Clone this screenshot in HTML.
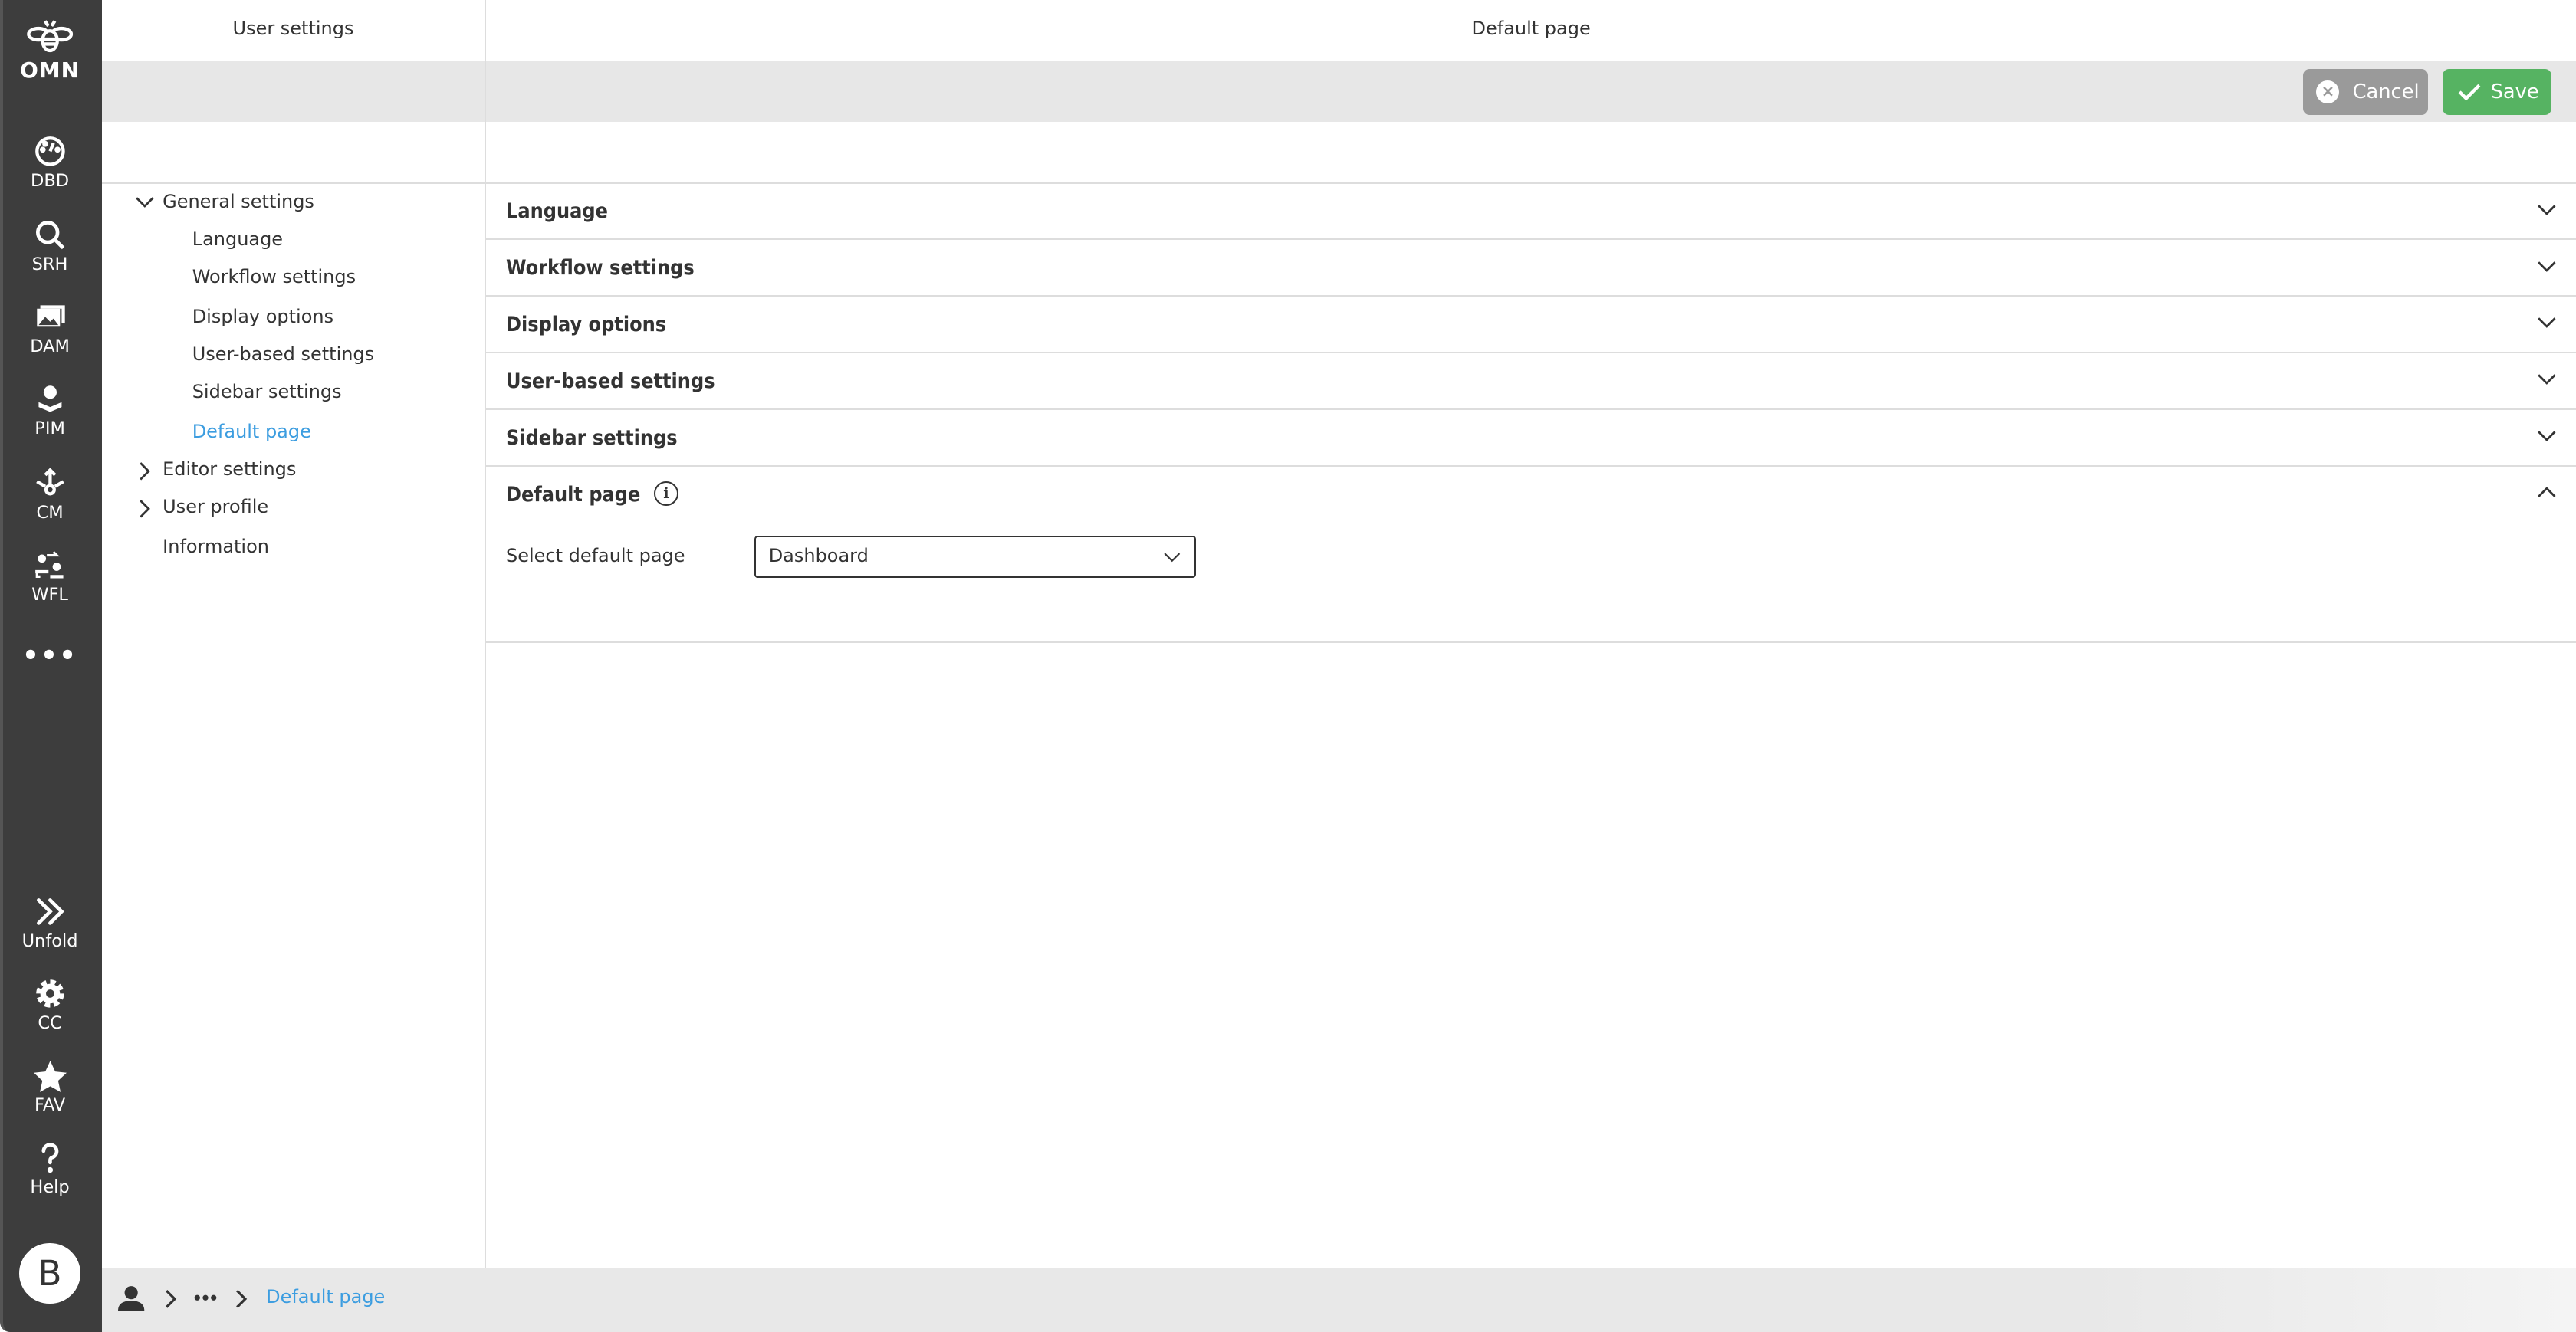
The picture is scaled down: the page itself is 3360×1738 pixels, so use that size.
<!DOCTYPE html>
<html><head><meta charset="utf-8"><style>
*{box-sizing:border-box;margin:0;padding:0}
html,body{width:3360px;height:1738px;overflow:hidden;background:#000}
#w{zoom:2.142857;width:1568px;height:811px;position:relative;background:#fff;font-family:"DejaVu Sans","Liberation Sans",sans-serif;color:#333;font-size:11.2px}
.sb{position:absolute;left:0;top:0;width:62px;height:811px;background:#3d3d3d;border-left:2px solid #555;border-radius:0 0 0 6px}
.it{position:absolute;left:-2px;width:61px;text-align:center;color:#fff;font-size:10.5px}
.it svg{display:block;margin:0 auto 2px}
.abs{position:absolute}
.ln{position:absolute;background:#ddd}
.nav{position:absolute;font-size:11.2px;color:#333}
.sec{position:absolute;left:296px;right:0;height:34.5px;border-bottom:1px solid #ddd}
.sec b{position:absolute;left:12px;top:10px;font-size:12.5px;font-family:"DejaVu Sans Condensed","DejaVu Sans",sans-serif;font-weight:bold}
.sec svg{position:absolute;right:12px;top:12px}
</style></head><body><div id="w">
<div class="sb">
 <div class="it" style="top:10px"><svg width="30" height="24" viewBox="0 0 30 24" fill="none" stroke="#fff" stroke-width="2"><ellipse cx="8" cy="11" rx="6" ry="3.5"/><ellipse cx="22" cy="11" rx="6" ry="3.5"/><ellipse cx="15" cy="15" rx="4.5" ry="6" fill="#3d3d3d"/><path d="M11 14h8M11 17h8M12 3l2 3M18 3l-2 3"/></svg><div style="font-size:13px;font-weight:bold;letter-spacing:.5px;margin-top:-1px">OMN</div></div>
 <div class="it" style="top:82px"><svg width="20" height="20" viewBox="0 0 20 20" fill="none" stroke="#fff" stroke-width="2"><circle cx="10" cy="10" r="8"/><path d="M10 10l2-5"/><circle cx="5.5" cy="9" r=".8" fill="#fff"/><circle cx="7" cy="5.5" r=".8" fill="#fff"/><circle cx="14.5" cy="9" r=".8" fill="#fff"/></svg>DBD</div>
 <div class="it" style="top:133px"><svg width="20" height="20" viewBox="0 0 20 20" fill="none" stroke="#fff" stroke-width="2.2"><circle cx="8.5" cy="8.5" r="6"/><path d="M13 13l5 5"/></svg>SRH</div>
 <div class="it" style="top:183px"><svg width="20" height="20" viewBox="0 0 20 20" fill="#fff"><path d="M2 5h14v11H2z"/><path d="M4 3h15v11h-2V5H4z"/><path d="M3 15l4-5 3 3 2-2 3 4z" fill="#3d3d3d"/></svg>DAM</div>
 <div class="it" style="top:233px"><svg width="20" height="20" viewBox="0 0 20 20" fill="#fff"><circle cx="10" cy="6" r="4"/><path d="M3 12l7 3 7-3v3l-7 3-7-3z"/></svg>PIM</div>
 <div class="it" style="top:284px"><svg width="20" height="20" viewBox="0 0 20 20" fill="none" stroke="#fff" stroke-width="2"><path d="M10 2v10M7 5l3-3 3 3M2 9l5 3M18 9l-5 3"/><circle cx="10" cy="14" r="2.5"/></svg>CM</div>
 <div class="it" style="top:334px"><svg width="20" height="20" viewBox="0 0 20 20" fill="#fff"><circle cx="5" cy="6" r="2.5"/><circle cx="14" cy="11" r="2.5"/><path d="M1 13h8v2H1zM10 16h8v2h-8z"/><path d="M8 4h6l-2-2M4 17h-2v-3" stroke="#fff" fill="none" stroke-width="1.5"/></svg>WFL</div>
 <div class="it" style="top:390px;font-size:16px;font-weight:bold;letter-spacing:1px">•••</div>
 <div class="it" style="top:545px"><svg width="20" height="20" viewBox="0 0 20 20" fill="none" stroke="#fff" stroke-width="2.2" stroke-linecap="round"><path d="M3 3l7 7-7 7M10 3l7 7-7 7"/></svg>Unfold</div>
 <div class="it" style="top:595px"><svg width="20" height="20" viewBox="0 0 20 20"><circle cx="10" cy="10" r="6.5" fill="none" stroke="#fff" stroke-width="4" stroke-dasharray="3 2.1"/><circle cx="10" cy="10" r="6" fill="#fff"/><circle cx="10" cy="10" r="2.5" fill="#3d3d3d"/></svg>CC</div>
 <div class="it" style="top:645px"><svg width="22" height="20" viewBox="0 0 22 20" fill="#fff"><path d="M11 1l3 6.5 7 .8-5.2 4.8 1.5 6.9L11 16.5 4.7 20l1.5-6.9L1 8.3l7-.8z"/></svg>FAV</div>
 <div class="it" style="top:695px"><svg width="20" height="20" viewBox="0 0 20 20" fill="none" stroke="#fff" stroke-width="2.2" stroke-linecap="round"><path d="M6 6a4 4 0 1 1 5 4c-1 .5-1 1-1 3"/><circle cx="10" cy="17.5" r=".6" fill="#fff"/></svg>Help</div>
 <div class="abs" style="left:10px;top:757px;width:37px;height:37px;border-radius:50%;background:#fff;color:#333;font-size:21px;text-align:center;line-height:37px">B</div>
</div>
<div class="abs" style="left:62px;top:0;width:233px;height:37px;text-align:center;line-height:35px">User settings</div>
<div class="abs" style="left:296px;right:0;top:0;height:37px;text-align:center;line-height:35px">Default page</div>
<div class="abs" style="left:62px;right:0;top:37px;height:37px;background:#e7e7e7"></div>
<div class="ln" style="left:62px;right:0;top:111px;height:1px"></div>
<div class="ln" style="left:295px;top:0;width:1px;height:772px"></div>
<div class="abs" style="left:1402px;top:42px;width:76px;height:28px;background:#9a9a9a;border-radius:4px;color:#fff;font-size:12px;line-height:28px"><span style="position:absolute;left:8px;top:7px;width:14px;height:14px;border-radius:50%;background:#fff;color:#9a9a9a;font-size:10px;line-height:14px;text-align:center;font-weight:bold">×</span><span style="position:absolute;left:30px">Cancel</span></div>
<div class="abs" style="left:1487px;top:42px;width:66px;height:28px;background:#56b362;border-radius:4px;color:#fff;font-size:12px;line-height:28px"><svg style="position:absolute;left:9px;top:8px" width="14" height="12" viewBox="0 0 14 12" fill="none" stroke="#fff" stroke-width="2"><path d="M1 6l4 4 8-8"/></svg><span style="position:absolute;left:29px">Save</span></div>
<svg class="abs" style="left:82px;top:119px" width="12" height="8" viewBox="0 0 12 8" fill="none" stroke="#333" stroke-width="1.3"><path d="M1 1.5l5 5 5-5"/></svg>
<div class="nav" style="left:99px;top:116px">General settings</div>
<div class="nav" style="left:117px;top:139px">Language</div>
<div class="nav" style="left:117px;top:162px">Workflow settings</div>
<div class="nav" style="left:117px;top:186px">Display options</div>
<div class="nav" style="left:117px;top:209px">User-based settings</div>
<div class="nav" style="left:117px;top:232px">Sidebar settings</div>
<div class="nav" style="left:117px;top:256px;color:#3c9de0">Default page</div>
<svg class="abs" style="left:84px;top:281px" width="8" height="12" viewBox="0 0 8 12" fill="none" stroke="#333" stroke-width="1.3"><path d="M1.5 1l5 5-5 5"/></svg>
<div class="nav" style="left:99px;top:279px">Editor settings</div>
<svg class="abs" style="left:84px;top:304px" width="8" height="12" viewBox="0 0 8 12" fill="none" stroke="#333" stroke-width="1.3"><path d="M1.5 1l5 5-5 5"/></svg>
<div class="nav" style="left:99px;top:302px">User profile</div>
<div class="nav" style="left:99px;top:326px">Information</div>
<div class="sec" style="top:111.5px"><b>Language</b><svg width="12" height="8" viewBox="0 0 12 8" fill="none" stroke="#333" stroke-width="1.3"><path d="M1 1.5l5 5 5-5"/></svg></div>
<div class="sec" style="top:146px"><b>Workflow settings</b><svg width="12" height="8" viewBox="0 0 12 8" fill="none" stroke="#333" stroke-width="1.3"><path d="M1 1.5l5 5 5-5"/></svg></div>
<div class="sec" style="top:180.5px"><b>Display options</b><svg width="12" height="8" viewBox="0 0 12 8" fill="none" stroke="#333" stroke-width="1.3"><path d="M1 1.5l5 5 5-5"/></svg></div>
<div class="sec" style="top:215px"><b>User-based settings</b><svg width="12" height="8" viewBox="0 0 12 8" fill="none" stroke="#333" stroke-width="1.3"><path d="M1 1.5l5 5 5-5"/></svg></div>
<div class="sec" style="top:249.5px"><b>Sidebar settings</b><svg width="12" height="8" viewBox="0 0 12 8" fill="none" stroke="#333" stroke-width="1.3"><path d="M1 1.5l5 5 5-5"/></svg></div>
<div class="sec" style="top:284px;height:107.5px"><b>Default page</b><svg width="12" height="8" viewBox="0 0 12 8" fill="none" stroke="#333" stroke-width="1.3"><path d="M1 6.5l5-5 5 5"/></svg>
 <span class="abs" style="left:102px;top:9px;width:15px;height:15px;border:1.3px solid #333;border-radius:50%;font-size:9px;font-weight:bold;text-align:center;line-height:13px;font-family:'DejaVu Serif',serif">i</span>
 <span class="abs" style="left:12px;top:48px">Select default page</span>
 <div class="abs" style="left:163px;top:42px;width:269px;height:26px;border:1px solid #333;border-radius:2px"><span class="abs" style="left:8px;top:5px">Dashboard</span><svg class="abs" style="right:8px;top:9px" width="11" height="7" viewBox="0 0 11 7" fill="none" stroke="#333" stroke-width="1"><path d="M1 1l4.5 4.5L10 1"/></svg></div>
</div>
<div class="abs" style="left:62px;right:0;top:772px;height:39px;background:linear-gradient(90deg,#e8e8e8 80%,#f4f4f4)"></div>
<svg class="abs" style="left:72px;top:782px" width="16" height="16" viewBox="0 0 16 16" fill="#333"><circle cx="8" cy="5" r="4"/><path d="M0 16c0-5 4-6 8-6s8 1 8 6z"/></svg>
<svg class="abs" style="left:100px;top:785px" width="8" height="12" viewBox="0 0 8 12" fill="none" stroke="#333" stroke-width="1.5"><path d="M1.5 1l5 5-5 5"/></svg>
<svg class="abs" style="left:118px;top:788px" width="14" height="4" viewBox="0 0 14 4" fill="#333"><circle cx="2" cy="2" r="1.7"/><circle cx="7" cy="2" r="1.7"/><circle cx="12" cy="2" r="1.7"/></svg>
<svg class="abs" style="left:143px;top:785px" width="8" height="12" viewBox="0 0 8 12" fill="none" stroke="#333" stroke-width="1.5"><path d="M1.5 1l5 5-5 5"/></svg>
<div class="abs" style="left:162px;top:783px;color:#3c9de0">Default page</div>
</div></body></html>
